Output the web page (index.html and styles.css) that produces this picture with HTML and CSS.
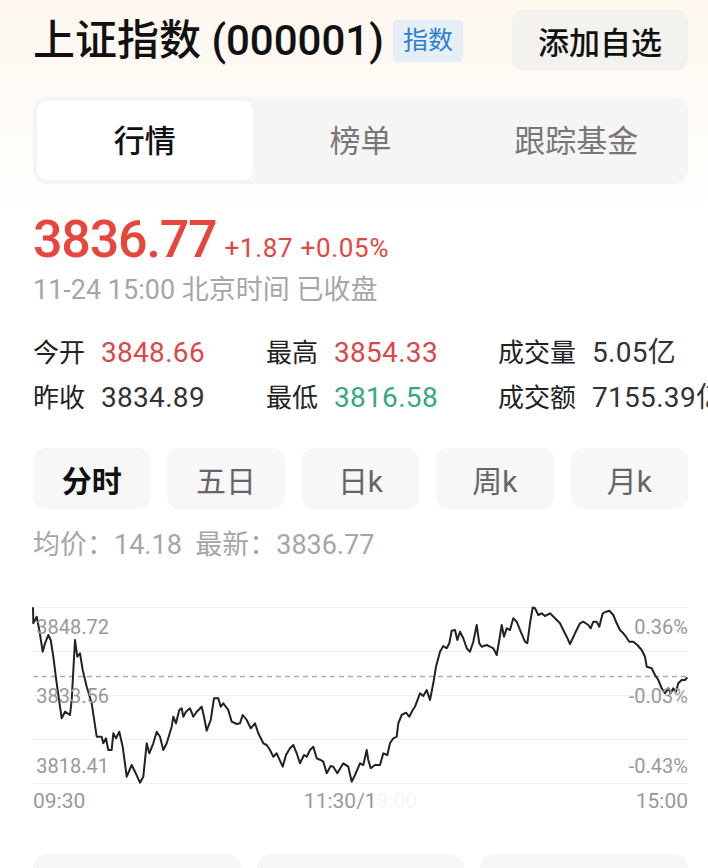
FILE: index.html
```html
<!DOCTYPE html>
<html lang="zh-CN">
<head>
    <meta charset="UTF-8">
    <meta name="viewport" content="width=device-width, initial-scale=1.0">
    <title>上证指数</title>
    <link rel="stylesheet" href="styles.css">
</head>
<body>
    <div id="page">
        <div class="header">
            <div class="title-wrap">
                <h1 class="title">上证指数 (000001)</h1>
                <span class="badge">指数</span>
            </div>
            <button class="add-button">添加自选</button>
        </div>

        <div class="tabs">
            <div class="tab active">行情</div>
            <div class="tab">榜单</div>
            <div class="tab">跟踪基金</div>
        </div>

        <div class="price-row">
            <span class="price">3836.77</span>
            <span class="change">+1.87 +0.05%</span>
        </div>
        <p class="status">11-24 15:00 北京时间 已收盘</p>

        <div class="stats">
            <div class="stat"><span class="label">今开</span><span class="value up">3848.66</span></div>
            <div class="stat"><span class="label">最高</span><span class="value up">3854.33</span></div>
            <div class="stat"><span class="label">成交量</span><span class="value">5.05亿</span></div>
            <div class="stat"><span class="label">昨收</span><span class="value">3834.89</span></div>
            <div class="stat"><span class="label">最低</span><span class="value down">3816.58</span></div>
            <div class="stat"><span class="label">成交额</span><span class="value">7155.39亿</span></div>
        </div>

        <div class="periods">
            <div class="period active">分时</div>
            <div class="period">五日</div>
            <div class="period">日k</div>
            <div class="period">周k</div>
            <div class="period">月k</div>
        </div>

        <p class="avg">均价：14.18&nbsp;&nbsp;最新：3836.77</p>

        <!-- 分时图 -->
        <div class="chart">
            <svg class="chart-svg" width="655" height="177" viewBox="0 0 655 177">
                <g stroke="#f1f1f1" stroke-width="1">
                    <line x1="0" y1="0.5" x2="655" y2="0.5"/>
                    <line x1="0" y1="44.5" x2="655" y2="44.5"/>
                    <line x1="0" y1="88.5" x2="655" y2="88.5"/>
                    <line x1="0" y1="132.5" x2="655" y2="132.5"/>
                    <line x1="0" y1="176.5" x2="655" y2="176.5"/>
                </g>
                <line x1="0" y1="69.5" x2="655" y2="69.5" stroke="#aaa" stroke-width="1.3" stroke-dasharray="5 4"/>
                <polyline fill="none" stroke="#222" stroke-width="2" stroke-linejoin="round"
                    points="0,0.3 0.3,16.3 3.7,9.7 6.3,23 9.7,44.7 12,36.3 15.3,28 17.7,33 20.3,49.7 23.7,76.3 28.7,111.3 32,104.7 37,108 38.7,93 42,33 44.3,49.7 47,46.3 49.7,63 53.7,79.7 58.7,96.3 63.7,129.7 68.7,129.7 70.3,136.3 73,131.3 75.3,143 78.7,143 80.3,126.3 83,131.3 86.3,124.7 89.7,139.7 93.7,169.7 98.7,158 102,164.7 107,175.7 110.3,169.7 113.7,136.3 116.3,146.3 120.3,136.3 123.7,124.7 127,129.7 130.3,143 133.7,136.3 138.7,119.7 140.3,109.7 143,116.3 146.3,103 148.7,101.3 150.3,109.7 153,104.7 157,101.3 160.3,109.7 163.7,104.7 168.7,99.7 171,109.7 173.7,123.7 177.7,113 181,91.3 185.3,91.3 187.7,99.7 190.3,96.3 195.3,103 198.7,114.7 203.7,117 207,116.3 209.7,108 213.7,113 217.7,121.3 222,116.3 225.3,126.3 230.3,136.3 233.7,138 237,143 240.3,149.7 243.7,146.3 249.7,159.7 253,148 257,141.3 260.3,138 263.7,146.3 267,156.3 271,148 273.7,149.7 277,143 280.3,139.7 283.7,151.3 287.7,153 290.3,154.7 293.7,166.3 297.7,159 300.3,159.7 304.3,166.3 310.3,156.3 315.3,159.7 318.7,174.7 322,168 327,156.3 330.3,158 333.7,143 335.3,153 337.7,161.3 342,158 347,158 350.3,146.3 354.3,148 357,136.3 360.3,131.3 363.7,129.7 365.3,116.3 368.7,108 373,105.7 376.3,109.7 379.7,103 382,99.7 387,86.3 390.3,89 393.7,83 397,93 400.3,76.3 403,59.7 407,44.7 410.3,39 413.7,41.3 416.3,36.3 418.7,23.7 422,23 424.3,33 427,24.7 430.3,31.3 433.7,41.3 437,44.7 440.3,34.7 443.7,18 446.3,36.3 448.7,39.7 453.7,38 457,39.7 460.3,41.3 463.7,48 466.3,33 468.7,18 471,29.7 473.7,21.3 477,23 480.3,11.3 483.7,14.7 487.7,24.7 492,34.7 494.3,36.3 497,16.3 499.7,0.5 502,1.3 505.3,8 508.7,6.3 512,9 517,6.3 522,11.3 527,16.3 530.3,23 533.7,29.7 537,37 542,26.3 547,16.3 550.3,14.7 555.3,18 557.7,21.3 560.3,14.7 563.7,14.7 566.3,19.7 569.7,6.3 573,4.7 576.3,3.7 580.3,8 583.7,16.3 587,23 590.3,26.3 593,29.7 596.3,34.7 600.3,34.7 604.3,38 608.7,43 612,49.7 613.7,59.7 618.7,61.3 622,68 625.3,73 628.7,81.3 632,86.3 635.3,81.3 637.7,86.3 640.3,81.3 643,84.7 645.3,76.3 648.7,73 652,73 654.3,70.3"/>
            </svg>
            <span class="axis-left top-label">3848.72</span>
            <span class="axis-left mid-label">3833.56</span>
            <span class="axis-left low-label">3818.41</span>
            <span class="axis-right top-label">0.36%</span>
            <span class="axis-right mid-label">-0.03%</span>
            <span class="axis-right low-label">-0.43%</span>
        </div>
        <div class="times">
            <span>09:30</span>
            <span class="mid-time">11:30/1<span class="faded">3:00</span></span>
            <span>15:00</span>
        </div>

        <div class="cards">
            <div class="card"></div>
            <div class="card"></div>
            <div class="card"></div>
        </div>
    </div>
</body>
</html>
```

FILE: styles.css
```css
body {
    margin: 0;
    font-family: Roboto, "Noto Sans CJK SC", sans-serif;
    color: #111;
    overflow: hidden;
    background: linear-gradient(#fdf7ee, #fffdfa 150px, #fff 230px);
}
#page {
    padding: 10px 20px 0 33px;
}
.header {
    display: flex;
    justify-content: space-between;
    align-items: center;
    height: 61px;
}
.title-wrap {
    display: flex;
    align-items: center;
    gap: 9px;
}
.title {
    margin: 0;
    font-size: 42px;
    font-weight: 500;
    line-height: 48px;
}
.badge {
    background-color: #e6eff7;
    color: #2b7fd3;
    font-size: 25px;
    line-height: 42px;
    padding: 0 10px;
    border-radius: 4px;
}
.add-button {
    width: 176px;
    height: 61px;
    font-family: inherit;
    font-size: 31px;
    font-weight: 500;
    color: #111;
    background-color: #f4f2ef;
    border: none;
    border-radius: 12px;
}
.tabs {
    display: grid;
    grid-template-columns: repeat(3, 1fr);
    margin-top: 26px;
    padding: 4px;
    height: 79px;
    background-color: #f5f5f5;
    border-radius: 14px;
}
.tab {
    display: flex;
    align-items: center;
    justify-content: center;
    padding-bottom: 4px;
    font-size: 31px;
    color: #777;
    border-radius: 10px;
}
.tab.active {
    background-color: #fff;
    color: #111;
    font-weight: 500;
}
.price-row {
    display: flex;
    align-items: baseline;
    gap: 8px;
    margin-top: 26px;
    height: 60px;
    color: #e8453c;
}
.price {
    font-size: 52px;
    font-weight: 500;
    letter-spacing: -1.2px;
    line-height: 60px;
}
.change {
    font-size: 26px;
    letter-spacing: 0.7px;
}
.status {
    margin: 2px 0 0;
    font-size: 27px;
    line-height: 36px;
    color: #a6a6a6;
}
.stats {
    display: grid;
    grid-template-columns: 233px 232px 1fr;
    row-gap: 9px;
    margin-top: 27px;
    white-space: nowrap;
}
.stat {
    display: flex;
    gap: 16px;
    font-size: 26px;
    line-height: 36px;
    color: #222;
}
.value {
    font-size: 28px;
    letter-spacing: 0.3px;
    color: #333;
}
.value.up {
    color: #d9484a;
}
.value.down {
    color: #36a883;
}
.periods {
    display: grid;
    grid-template-columns: repeat(5, 1fr);
    gap: 17px;
    margin-top: 32px;
}
.period {
    height: 61px;
    display: flex;
    align-items: center;
    justify-content: center;
    font-size: 30px;
    color: #666;
    background-color: #f7f7f7;
    border-radius: 12px;
}
.period.active {
    color: #111;
    font-weight: 700;
}
.avg {
    margin: 18px 0 0;
    font-size: 27px;
    line-height: 36px;
    color: #a6a6a6;
}
.chart {
    position: relative;
    margin-top: 44px;
    height: 177px;
}
.chart-svg {
    display: block;
    overflow: visible;
}
.axis-left, .axis-right {
    position: absolute;
    font-size: 20px;
    line-height: 24px;
    color: #999;
}
.axis-left {
    left: 0;
    width: 76px;
    text-align: right;
}
.axis-right {
    right: 0;
}
.top-label {
    top: 8px;
}
.mid-label {
    top: 77px;
}
.low-label {
    top: 147px;
}
.times {
    display: flex;
    justify-content: space-between;
    font-size: 21px;
    line-height: 26px;
    color: #999;
    margin-top: 4px;
}
.faded {
    color: #f5f5f5;
}
.cards {
    display: grid;
    grid-template-columns: repeat(3, 1fr);
    gap: 16px;
    margin-top: 40px;
}
.card {
    height: 80px;
    background-color: #f6f6f6;
    border-radius: 14px;
}
```
